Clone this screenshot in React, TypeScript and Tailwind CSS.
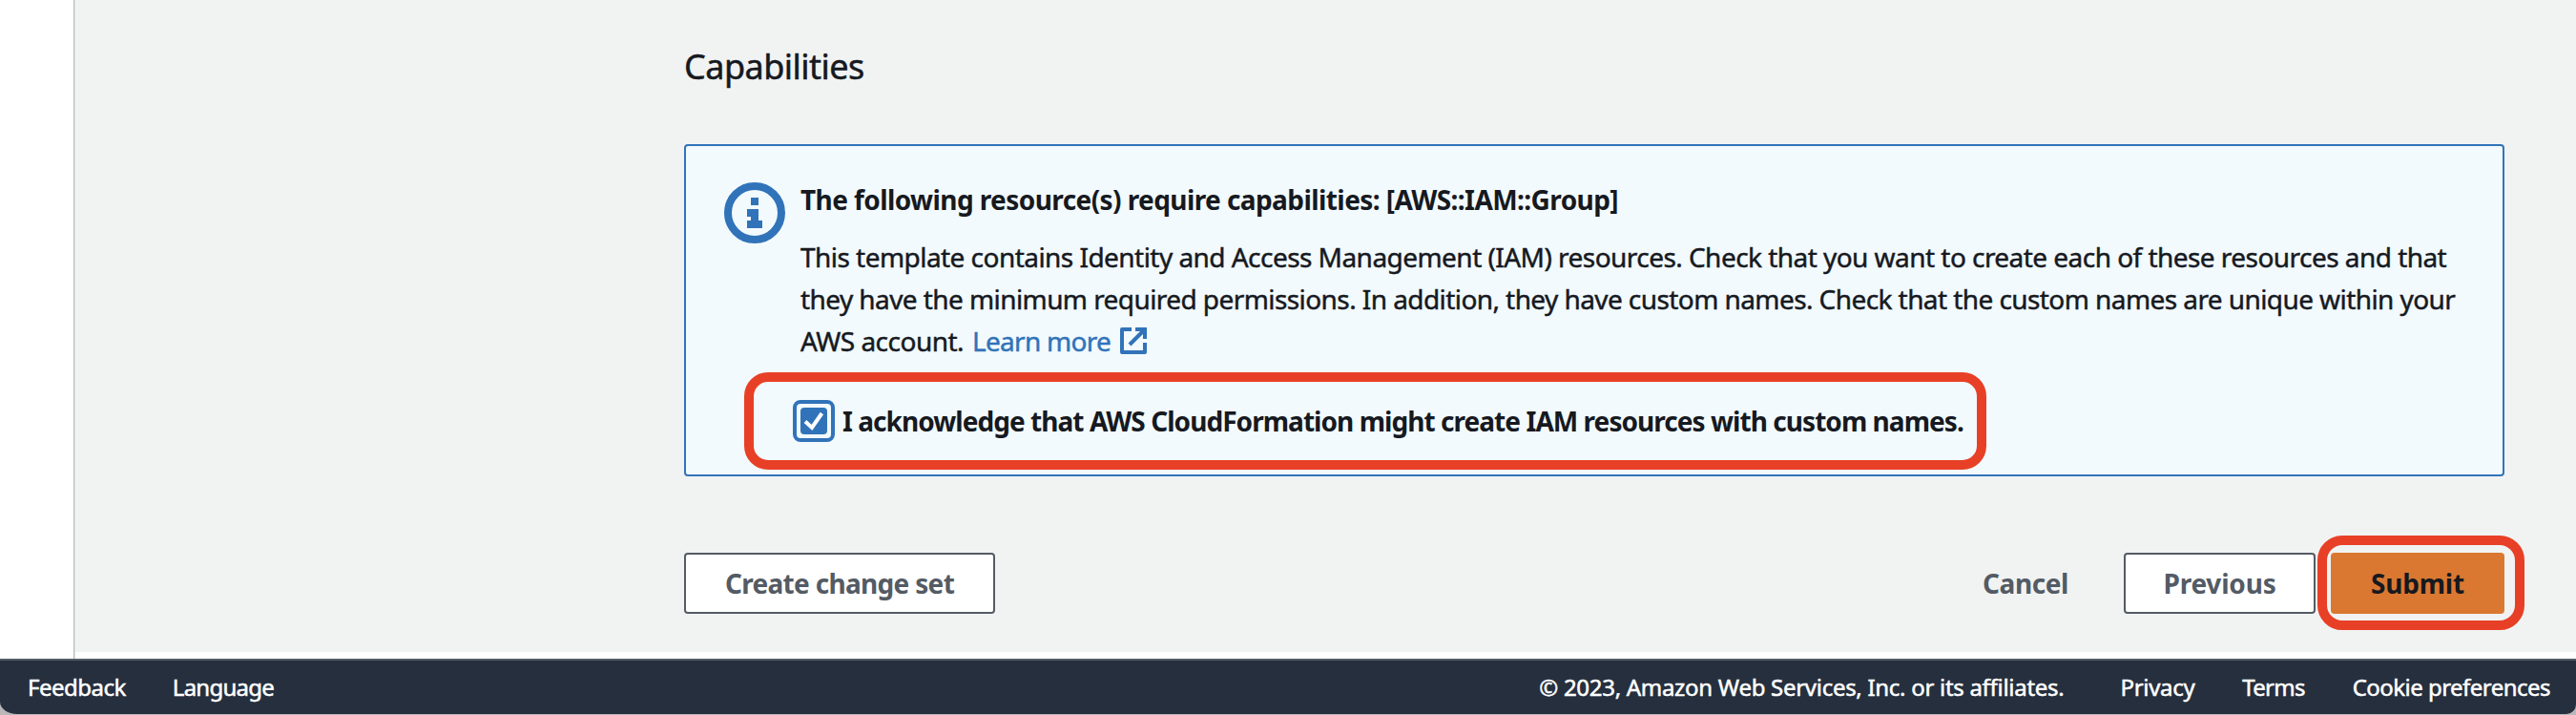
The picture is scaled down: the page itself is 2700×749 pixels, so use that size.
import React from "react";

function InfoIcon() {
  return (
    <svg viewBox="0 0 16 16" className="h-16 w-16 shrink-0 text-[#3173b9]" fill="none">
      <circle cx="8" cy="8" r="7" stroke="currentColor" strokeWidth="2" />
      <path d="M7 4h2v2H7zM6 7h3v3h1v2H6v-2h1V9H6z" fill="currentColor" shapeRendering="crispEdges" />
    </svg>
  );
}

function ExternalIcon() {
  return (
    <svg viewBox="0 0 16 16" className="ml-[8px] h-8 w-8 shrink-0" fill="none" stroke="currentColor" strokeWidth="2">
      <path d="M9 2h5v5" />
      <path d="M6 10l8-8" />
      <path d="M14 9.05V14H2V2h5" strokeLinejoin="round" />
    </svg>
  );
}

function Checkbox() {
  return (
    <span
      role="checkbox"
      aria-checked="true"
      className="flex h-11 w-11 shrink-0 items-center justify-center rounded-lg border-4 border-[#3173b9]"
    >
      <span className="flex h-7 w-7 items-center justify-center rounded bg-[#3173b9]">
        <svg viewBox="0 0 28 28" className="h-7 w-7" fill="none" stroke="#fff" strokeWidth="4">
          <path d="M5 14.6l7 6.4L22.4 6" />
        </svg>
      </span>
    </span>
  );
}

function Alert() {
  return (
    <section className="mt-[59px] flex h-[348px] w-[1908px] rounded border-2 border-[#3173b9] bg-[#f2fafd] pl-10 pt-[34px] text-[28px] leading-[44px]">
      <div className="pt-1">
        <InfoIcon />
      </div>
      <div className="ml-[16px] whitespace-nowrap">
        <h3 className="font-bold tracking-[-0.578px]">
          The following resource(s) require capabilities: [AWS::IAM::Group]
        </h3>
        <div className="mt-4 [-webkit-text-stroke:0.45px_currentColor]">
          <p className="tracking-[-0.542px]">
            This template contains Identity and Access Management (IAM) resources. Check that you want to create each of these resources and that
          </p>
          <p className="tracking-[-0.577px]">
            they have the minimum required permissions. In addition, they have custom names. Check that the custom names are unique within your
          </p>
          <p className="flex items-center tracking-[-0.51px]">
            AWS account.
            <a className="ml-[9px] flex items-center tracking-[-0.727px] text-[#3173b9]">
              Learn more
              <ExternalIcon />
            </a>
          </p>
        </div>
        <div className="-ml-[59px] mt-[11px] flex h-[102px] w-[1302px] items-center rounded-[25px] border-[10px] border-[#e84026] pl-[41px]">
          <Checkbox />
          <label className="ml-[8px] font-bold tracking-[-0.945px]">
            I acknowledge that AWS CloudFormation might create IAM resources with custom names.
          </label>
        </div>
      </div>
    </section>
  );
}

function Actions() {
  return (
    <div className="mt-20 flex h-16 w-[1908px] items-center text-[28px] font-bold leading-[44px] text-[#545b64]">
      <button className="flex h-16 w-[326px] items-center justify-center rounded border-2 border-[#545b64] bg-white tracking-[-0.68px]">
        Create change set
      </button>
      <button className="ml-auto tracking-[-0.422px]">Cancel</button>
      <button className="ml-[58px] h-16 w-[201px] rounded border-2 border-[#545b64] bg-white tracking-[-0.194px]">
        Previous
      </button>
      <div className="relative ml-4">
        <button className="h-16 w-[182px] rounded bg-[#da7831] tracking-[-0.219px] text-[#16191f]">Submit</button>
        <span className="pointer-events-none absolute -left-[14px] -top-[18px] h-[99px] w-[217px] rounded-[26px] border-[10px] border-[#e84026]" />
      </div>
    </div>
  );
}

function Footer() {
  return (
    <div className="bg-[#b9b7ba] pb-px">
      <footer className="flex h-[58px] items-center whitespace-nowrap rounded-bl-[18px_13px] rounded-br-[10px] border-t-2 border-[#545b64] bg-[#262f3e] pl-[29px] pr-[27px] text-[24px] leading-9 text-white [-webkit-text-stroke:0.5px_currentColor]">
        <a className="tracking-[-0.505px]">Feedback</a>
        <a className="ml-[49px] tracking-[-0.741px]">Language</a>
        <span className="ml-auto tracking-[-0.287px]">© 2023, Amazon Web Services, Inc. or its affiliates.</span>
        <a className="ml-[59px] tracking-[-0.3px]">Privacy</a>
        <a className="ml-[50px] tracking-[-0.738px]">Terms</a>
        <a className="ml-[50px] tracking-[-0.533px]">Cookie preferences</a>
      </footer>
    </div>
  );
}

export default function App() {
  return (
    <div className="flex h-[749px] w-[2700px] flex-col overflow-hidden bg-white font-['Noto_Sans','Open_Sans',sans-serif] text-[#16191f]">
      <div className="flex h-[690px]">
        <aside className="w-[77px] shrink-0 bg-white" />
        <div className="w-px shrink-0 bg-[#b6bbbd]" />
        <div className="w-px shrink-0 bg-[#dfe3e4]" />
        <main className="h-[683px] flex-1 bg-[#f1f3f3] pl-[638px] pt-[48px]">
          <h2 className="text-[36px] leading-[44px] tracking-[-0.534px] [-webkit-text-stroke:0.5px_currentColor]">Capabilities</h2>
          <Alert />
          <Actions />
        </main>
      </div>
      <Footer />
    </div>
  );
}
